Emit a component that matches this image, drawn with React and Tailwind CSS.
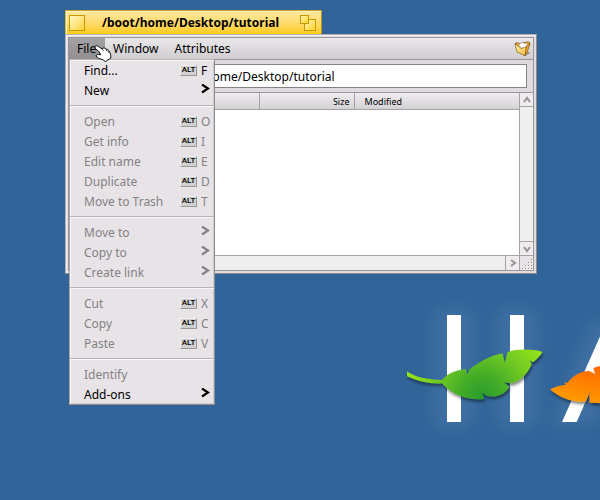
import { useState } from 'react';

const MENU_GROUPS = [
  [
    { label: 'Find...', shortcut: 'F', enabled: true },
    { label: 'New', submenu: true, enabled: true },
  ],
  [
    { label: 'Open', shortcut: 'O' },
    { label: 'Get info', shortcut: 'I' },
    { label: 'Edit name', shortcut: 'E' },
    { label: 'Duplicate', shortcut: 'D' },
    { label: 'Move to Trash', shortcut: 'T' },
  ],
  [
    { label: 'Move to', submenu: true },
    { label: 'Copy to', submenu: true },
    { label: 'Create link', submenu: true },
  ],
  [
    { label: 'Cut', shortcut: 'X' },
    { label: 'Copy', shortcut: 'C' },
    { label: 'Paste', shortcut: 'V' },
  ],
  [
    { label: 'Identify' },
    { label: 'Add-ons', submenu: true, enabled: true },
  ],
];

function AltKey() {
  return (
    <span className="flex h-[11px] w-[17px] items-center justify-center border border-t-[#efefef] border-l-[#efefef] border-r-[#989898] border-b-[#989898] bg-[#d0d0d0] font-['Roboto',sans-serif] text-[8px] leading-none font-medium text-black">
      ALT
    </span>
  );
}

function SubmenuArrow() {
  return (
    <svg width="10" height="12" viewBox="0 0 10 12" aria-hidden="true">
      <path d="M1 0.5 L7 4.5 L1 8.5" fill="none" stroke="currentColor" strokeWidth="2.2" />
    </svg>
  );
}

function MenuItem({ label, shortcut, submenu, enabled }) {
  return (
    <button
      type="button"
      role="menuitem"
      disabled={!enabled}
      className="flex h-5 w-full items-center pr-[3px] pl-3.5 text-left text-black disabled:text-[#848284]"
    >
      <span className="flex-1 pt-0.5">{label}</span>
      {shortcut && <AltKey />}
      {shortcut && <span className="ml-1 w-[10px] pt-0.5">{shortcut}</span>}
      {submenu && <SubmenuArrow />}
    </button>
  );
}

function FileMenu() {
  return (
    <div
      role="menu"
      className="absolute top-full left-0 z-10 w-[146px] border border-t-[#b4b4b4] border-l-[#a8a8a8] border-r-[#8e8e8e] border-b-[#8e8e8e] bg-[#e7e3e7] shadow-[inset_1px_1px_0_#f7f5f7,inset_-1px_-1px_0_#cfcccf]"
    >
      {MENU_GROUPS.map((group, i) => (
        <div key={i}>
          {i > 0 && (
            <div className="pt-[5px] pb-1">
              <div className="h-0.5 border-t border-b border-t-[#b5b2b5] border-b-[#f8f6f8]" />
            </div>
          )}
          {group.map((item) => (
            <MenuItem key={item.label} {...item} />
          ))}
        </div>
      ))}
    </div>
  );
}

function HandCursor() {
  return (
    <svg
      width="18"
      height="18"
      viewBox="0 0 18 18"
      className="pointer-events-none absolute top-[7px] left-[25px] z-20"
      aria-hidden="true"
    >
      <path
        d="M1 1.4 C2 0.4 3.4 0.8 4.6 1.6 L8.2 4 L9.2 2.9 L11.2 3.2 L12 4.2 L13.6 4.4 L14.4 5.8 L15.6 6.6 L16.8 10.4 L16.8 13 L11.4 16.6 L9 14.8 L4.6 13.4 L2 11 C2 9.4 4 9.2 6.8 9.8 L4.8 6.4 L1.2 3.4 Z"
        fill="#fff"
        stroke="#111"
        strokeWidth="1"
        strokeLinejoin="round"
      />
      <path d="M8.2 4 L9.6 5.8 M12 4.4 L13 6.4 M14.4 6 L15 7.8" stroke="#222" strokeWidth="0.8" fill="none" />
    </svg>
  );
}

function FolderIcon() {
  return (
    <svg width="17" height="16" viewBox="0 0 17 16" aria-hidden="true">
      <defs>
        <linearGradient id="folder" x1="0" y1="0" x2="1" y2="1">
          <stop offset="0" stopColor="#fff2b0" />
          <stop offset="1" stopColor="#fbb838" />
        </linearGradient>
      </defs>
      <path d="M11 14 L14 10.5 L16.5 12 L13 14 Z" fill="#777" opacity="0.6" />
      <path d="M1 2.5 L3.5 1.6 L5 2.6 L14 0.8 L16.2 2 L11 14.6 Z" fill="#f0a52c" stroke="#5a4010" strokeWidth="0.6" />
      <path d="M4.6 4 L7.5 1.8 L13.4 2.8 L12 7 L8 8 Z" fill="#fff" stroke="#999" strokeWidth="0.4" />
      <path d="M1 2.8 L5 5.4 L7 7.6 L12.6 5.4 L11 14.8 L2.8 10.8 Z" fill="url(#folder)" stroke="#6b480c" strokeWidth="0.6" />
      <path d="M12.6 5.4 L15.8 2.6 L13.4 11 L11 14.8 Z" fill="#f7ab30" stroke="#6b4508" strokeWidth="0.5" />
    </svg>
  );
}

function ZoomIcon() {
  return (
    <svg width="16" height="16" viewBox="0 0 16 16" aria-hidden="true">
      <defs>
        <linearGradient id="zoom" x1="0" y1="0" x2="1" y2="1">
          <stop offset="0" stopColor="#fff6c0" />
          <stop offset="1" stopColor="#ffd21e" />
        </linearGradient>
      </defs>
      <rect x="4.5" y="4.5" width="11" height="11" fill="url(#zoom)" stroke="#c59a00" />
      <rect x="0.5" y="0.5" width="8" height="8" fill="url(#zoom)" stroke="#c59a00" />
    </svg>
  );
}

function ScrollButton({ label, path, className }) {
  return (
    <button
      type="button"
      aria-label={label}
      className={`flex shrink-0 items-center justify-center border-[#a5a2a5] bg-[#efebef] ${className}`}
    >
      <svg width="8" height="8" viewBox="0 0 8 8" aria-hidden="true">
        <path d={path} fill="none" stroke="#949294" strokeWidth="2" />
      </svg>
    </button>
  );
}

function ResizeGrip() {
  const dots = [
    [9, 0], [6, 3], [9, 3], [3, 6], [6, 6], [9, 6], [0, 9], [3, 9], [6, 9], [9, 9],
  ];
  return (
    <svg width="11" height="11" viewBox="0 0 11 11" aria-hidden="true">
      {dots.map(([x, y]) => (
        <g key={`${x}-${y}`}>
          <rect x={x + 1} y={y + 1} width="1" height="1" fill="#fff" />
          <rect x={x} y={y} width="1" height="1" fill="#8c8a8c" />
        </g>
      ))}
    </svg>
  );
}

function DesktopLogo() {
  return (
    <svg
      width="205"
      height="140"
      viewBox="0 0 615 420"
      className="absolute top-[300px] right-0"
      aria-hidden="true"
    >
      <defs>
        <radialGradient id="green" gradientUnits="userSpaceOnUse" cx="260" cy="290" r="210">
          <stop offset="0" stopColor="#2a9c2a" />
          <stop offset="0.3" stopColor="#43ac28" />
          <stop offset="0.7" stopColor="#74cc22" />
          <stop offset="1" stopColor="#90e01c" />
        </radialGradient>
        <linearGradient id="orange" x1="0.3" y1="1" x2="0.7" y2="0">
          <stop offset="0" stopColor="#ffa000" />
          <stop offset="0.4" stopColor="#ff8a00" />
          <stop offset="1" stopColor="#ff6a00" />
        </linearGradient>
        <filter id="glow" filterUnits="userSpaceOnUse" x="0" y="-60" width="760" height="540">
          <feGaussianBlur stdDeviation="20" />
        </filter>
        <filter id="shade" x="-10%" y="-10%" width="120%" height="130%">
          <feDropShadow dx="3" dy="7" stdDeviation="5" floodColor="#000" floodOpacity="0.5" />
        </filter>
      </defs>
      <g fill="#7ea2d2" opacity="0.17" filter="url(#glow)">
        <rect x="112" y="24" width="130" height="362" rx="40" />
        <rect x="301" y="24" width="130" height="362" rx="40" />
        <path d="M460 380 L590 60 L700 60 L600 380 Z" />
      </g>
      <rect x="156" y="45" width="42" height="321" fill="#fff" />
      <rect x="345" y="45" width="42" height="321" fill="#fff" />
      <path d="M501 366 L638 58 L660 104 L545 366 Z" fill="#fff" />
      <path
        filter="url(#shade)"
        fill="url(#green)"
        d="M36 214 C58 232 98 239 141 240 C158 220 184 210 213 207 L216 224 L224 208 C252 186 288 166 323 160 L329 188 L338 156 C370 146 412 147 443 156 C434 168 424 179 414 187 L403 181 L410 192 C398 220 378 244 349 250 L326 247 L343 260 C328 286 302 293 276 288 L261 278 L268 297 C220 302 172 286 141 250 C108 253 68 244 36 229 Z"
      />
      <path
        filter="url(#shade)"
        fill="url(#orange)"
        d="M465 268 C480 260 496 256 512 254 L508 246 L517 249 C532 228 556 214 582 213 L602 223 L595 205 C606 198 620 196 640 198 L640 310 L584 308 L583 279 L572 305 C530 308 492 292 465 268 Z"
      />
    </svg>
  );
}

export default function App() {
  const [path, setPath] = useState('/boot/home/Desktop/tutorial');

  return (
    <div className="relative min-h-screen overflow-hidden bg-[#316499] pt-2.5 pr-[63px] pl-[65px] font-['Noto_Sans','Open_Sans',sans-serif] text-[12px] leading-4 text-black">
      <DesktopLogo />

      <div className="relative">
        {/* title tab */}
        <div className="flex h-6 w-[257px] items-center border border-b-0 border-t-[#c9a227] border-l-[#d8b53c] border-r-[#b8941c] bg-linear-to-b from-[#ffeaa0] to-[#ffcb08] pr-[5px] pl-[3px] shadow-[inset_1px_1px_0_#fff2bd]">
          <button
            type="button"
            aria-label="Close"
            className="size-4 shrink-0 border border-[#c59a00] bg-linear-to-br from-[#fff6c0] to-[#ffd21e]"
          />
          <h1 className="flex-1 pr-1 text-center text-[12px] font-bold">/boot/home/Desktop/tutorial</h1>
          <button type="button" aria-label="Zoom" className="shrink-0">
            <ZoomIcon />
          </button>
        </div>

        {/* window frame */}
        <div className="border border-t-[#b0aeb0] border-l-[#b0aeb0] border-r-[#8c8a8c] border-b-[#8c8a8c] bg-[#e0dde0] p-0.5 shadow-[inset_1px_1px_0_#f4f2f4]">
          <div className="border border-[#989698] bg-[#dedbde]">
            <nav className="relative flex h-[22px] items-stretch border-b border-[#989698] bg-linear-to-b from-[#eae8ea] to-[#cfcdcf]">
              <button type="button" aria-haspopup="menu" className="w-9 bg-linear-to-b from-[#a4a2a4] to-[#908e90] pl-2 text-left">
                File
              </button>
              <button type="button" className="px-2">Window</button>
              <button type="button" className="px-2">Attributes</button>
              <button type="button" aria-label="Folder" className="ml-auto pr-0.5">
                <FolderIcon />
              </button>
              <FileMenu />
              <HandCursor />
            </nav>

            <div className="flex py-1 pr-1.5 pl-24">
              <input
                aria-label="Location"
                value={path}
                onChange={(e) => setPath(e.target.value)}
                className="h-6 min-w-0 flex-1 border border-[#848284] bg-white px-1 text-[12px] outline-none"
              />
            </div>

            <div className="flex border-t border-[#989698]">
              <div className="min-w-0 flex-1 bg-white">
                <div className="h-[162px]">
                  <table className="w-full table-fixed border-collapse text-[9px] leading-[13px]">
                    <thead>
                      <tr className="h-4 bg-linear-to-b from-[#efedef] to-[#d4d2d4]">
                        <th aria-label="Name" className="w-[190px] border-r border-b border-[#a5a2a5] p-0" />
                        <th className="w-[95px] border-r border-b border-[#a5a2a5] p-0 pt-0.5 pr-1 text-right font-normal">Size</th>
                        <th className="border-b border-[#a5a2a5] p-0 pt-0.5 pl-2.5 text-left font-normal">Modified</th>
                      </tr>
                    </thead>
                  </table>
                </div>
                <div className="flex h-[15px] border-t border-[#a5a2a5] bg-[#efefef]">
                  <div className="flex-1" />
                  <ScrollButton label="Scroll right" path="M2 1 L6 4 L2 7" className="w-[14px] border-l" />
                </div>
              </div>
              <div className="flex w-[14px] shrink-0 flex-col border-l border-[#a5a2a5] bg-[#efefef]">
                <ScrollButton label="Scroll up" path="M1 6 L4 2 L7 6" className="h-[14px] border-b" />
                <div className="flex-1" />
                <ScrollButton label="Scroll down" path="M1 2 L4 6 L7 2" className="h-[14px] border-t" />
                <div className="flex h-[15px] items-end justify-end border-t border-[#a5a2a5] bg-[#e7e3e7]">
                  <ResizeGrip />
                </div>
              </div>
            </div>
          </div>
        </div>
      </div>
    </div>
  );
}
